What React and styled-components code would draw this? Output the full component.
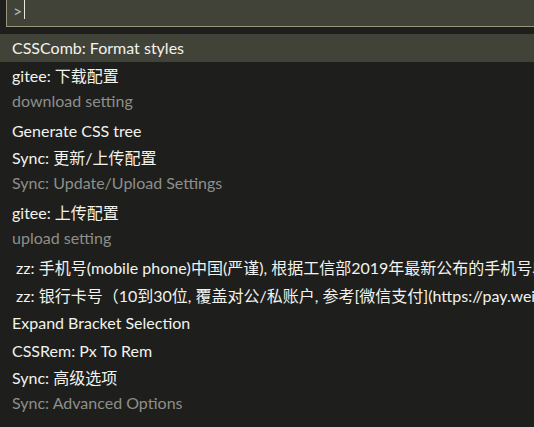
import React from "react";
import styled, { createGlobalStyle } from "styled-components";

const Global = createGlobalStyle`
  html, body { margin: 0; padding: 0; background: #1e1f1c; }
  body { width: 534px; height: 427px; overflow: hidden; }
`;

const Widget = styled.div`
  width: 534px;
  height: 427px;
  background: #1e1f1c;
  font-family: "Lato", "Noto Sans CJK SC", sans-serif;
  font-size: 16px;
  color: #f2f2ee;
  overflow: hidden;
`;

const InputWrap = styled.div`
  margin-left: 6px;
  width: 560px;
  height: 26px;
  background: #414339;
  border-left: 1px solid #99947c;
  border-bottom: 1px solid #99947c;
  display: flex;
  align-items: flex-start;
  padding-left: 6px;
`;

const Prompt = styled.span`
  font-size: 16px;
  line-height: 22px;
  color: #bdbdb4;
`;

const Caret = styled.span`
  display: inline-block;
  width: 1px;
  height: 19px;
  margin-left: 2px;
  background: #e8e8e2;
`;

const List = styled.div`
  margin-top: 7px;
  display: flex;
  flex-direction: column;
`;

const Item = styled.div`
  height: ${(p) => (p.$detail ? "55px" : "27.5px")};
  padding-left: 12px;
  background: ${(p) => (p.$active ? "#414339" : "transparent")};
  display: flex;
  flex-direction: column;
  white-space: pre;
`;

const Label = styled.div`
  height: 28px;
  line-height: 28px;
  color: #f2f2ee;
  flex: none;
`;

const Detail = styled.div`
  height: 22px;
  line-height: 22px;
  color: #8e8e8a;
  flex: none;
`;

const items = [
  { label: "CSSComb: Format styles", active: true },
  { label: "gitee: 下载配置", detail: "download setting" },
  { label: "Generate CSS tree" },
  { label: "Sync: 更新/上传配置", detail: "Sync: Update/Upload Settings" },
  { label: "gitee: 上传配置", detail: "upload setting" },
  { label: " zz: 手机号(mobile phone)中国(严谨), 根据工信部2019年最新公布的手机号段" },
  { label: " zz: 银行卡号（10到30位, 覆盖对公/私账户, 参考[微信支付](https://pay.weixin.qq.com)" },
  { label: "Expand Bracket Selection" },
  { label: "CSSRem: Px To Rem" },
  { label: "Sync: 高级选项", detail: "Sync: Advanced Options" },
];

export default function App() {
  return (
    <>
      <Global />
      <Widget>
        <InputWrap>
          <Prompt>&gt;</Prompt>
          <Caret />
        </InputWrap>
        <List>
          {items.map((it, i) => (
            <Item key={i} $active={it.active} $detail={!!it.detail}>
              <Label>{it.label}</Label>
              {it.detail && <Detail>{it.detail}</Detail>}
            </Item>
          ))}
        </List>
      </Widget>
    </>
  );
}
